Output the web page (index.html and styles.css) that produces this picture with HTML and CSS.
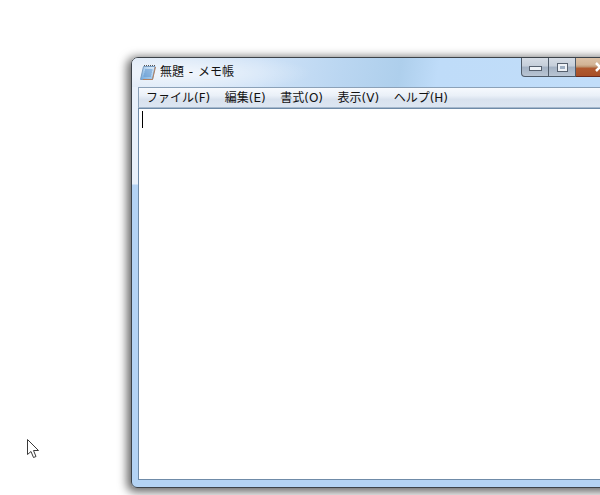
FILE: index.html
```html
<!DOCTYPE html>
<html lang="ja">
<head>
<meta charset="utf-8">
<title>無題 - メモ帳</title>
<link rel="stylesheet" href="styles.css">
</head>
<body>
<div class="desktop">
  <div class="window">
    <div class="titlebar">
      <svg class="app-icon" width="16" height="17" viewBox="0 0 16 17">
        <defs>
          <linearGradient id="page" x1="0" y1="1" x2="1" y2="0">
            <stop offset="0" stop-color="#6fa8dd"/>
            <stop offset="0.5" stop-color="#a9cdee"/>
            <stop offset="1" stop-color="#e4f0fb"/>
          </linearGradient>
        </defs>
        <path d="M3.500 2.500H15L12.500 15.500H0.500Z" fill="url(#page)" stroke="#7a9cc0"/>
        <path d="M5 6h7.500M4.500 8h7.500M4 10h7.500M3.500 12h7.500" stroke="#5f93cb" fill="none"/>
        <path d="M3 15.500H12.500L15.500 3" stroke="#b3805f" fill="none"/>
        <path d="M4 1.500h1M6 1.500h1M8 1.500h1M10 1.500h1M12 1.500h1M14 1.500h1" stroke="#555"/>
      </svg>
      <span class="title-text">無題 - メモ帳</span>
      <div class="caption-buttons">
        <div class="cap cap-min"><span class="glyph-min"></span></div>
        <div class="cap cap-max"><span class="glyph-max"></span></div>
        <div class="cap cap-close">
          <svg class="glyph-close" width="10" height="10" viewBox="0 0 10 10">
            <path d="M1 1L9 9M9 1L1 9" stroke="#fff" stroke-width="2.500" fill="none"/>
          </svg>
        </div>
      </div>
    </div>
    <div class="client">
      <div class="menubar">
        <span class="menu-item">ファイル(F)</span>
        <span class="menu-item">編集(E)</span>
        <span class="menu-item">書式(O)</span>
        <span class="menu-item">表示(V)</span>
        <span class="menu-item">ヘルプ(H)</span>
      </div>
      <div class="editor"><span class="caret"></span></div>
    </div>
  </div>
  <svg class="cursor" width="13" height="20" viewBox="0 0 13 20">
    <path d="M0.500 0.500V15.500L4 12.500 6.500 18.500 9 17.500 6.500 11.500H11.500Z" fill="#fff" stroke="#3a3a3a"/>
  </svg>
</div>
</body>
</html>
```
FILE: styles.css
```css
html, body {
  margin: 0;
  padding: 0;
  background: #fff;
}
.desktop {
  position: relative;
  width: 600px;
  height: 495px;
  overflow: hidden;
  background: #fff;
  font-family: "DejaVu Sans", "Noto Sans CJK JP", sans-serif;
  font-size: 12px;
  color: #111;
}
.window {
  position: absolute;
  left: 131px;
  top: 57px;
  width: 640px;
  height: 431px;
  box-sizing: border-box;
  border: 1px solid #3c4248;
  border-radius: 7px 7px 0 6px;
  box-shadow: -2px 2px 10px 2px rgba(0, 0, 0, .6);
  display: flex;
  flex-direction: column;
  padding: 0 0 7px 6px;
  background:
    linear-gradient(180deg, #e9f1fb 0, #e9f1fb 126px, #b4d3f4 127px, #b4d3f4 100%);
}
.titlebar {
  height: 29px;
  flex: none;
  margin-left: -6px;
  padding-left: 8px;
  display: flex;
  align-items: center;
  position: relative;
  border-radius: 6px 6px 0 0;
  background:
    radial-gradient(ellipse 130px 20px at 50px 15px, rgba(255,255,255,.65), rgba(255,255,255,0) 100%),
    linear-gradient(100deg, #dfeaf7 0, #cfe2f7 20%, #bad6f1 33%, #aecfec 42%, #bfdcf9 48%, #c3def9 100%);
}
.app-icon {
  flex: none;
  margin-right: 4px;
}
.title-text {
  line-height: 17px;
  font-size: 12px;
  white-space: nowrap;
  word-spacing: 1px;
}
.caption-buttons {
  position: absolute;
  left: 389px;
  top: 0;
  height: 19px;
  display: flex;
}
.cap {
  height: 19px;
  box-sizing: border-box;
  border: 1px solid #4e5a68;
  border-top: none;
  border-left-width: 0;
  display: flex;
  align-items: center;
  justify-content: center;
  background: linear-gradient(180deg, #d5dce5 0, #c5ced9 45%, #a3b1c3 50%, #b9c5d3 100%);
}
.cap-min {
  width: 28px;
  border-left-width: 1px;
  border-radius: 0 0 0 4px;
}
.cap-max {
  width: 27px;
}
.cap-close {
  width: 48px;
  border-color: #6b2a1c;
  background: linear-gradient(180deg, #dcc2a8 0, #d2b496 38%, #bd9370 50%, #b05a30 56%, #a85028 100%);
  justify-content: flex-start;
  padding-left: 19px;
}
.glyph-min {
  display: block;
  width: 11px;
  height: 3px;
  margin-top: 3px;
  background: #eef2f7;
  border: 1px solid #56606e;
}
.glyph-max {
  display: block;
  width: 5px;
  height: 3px;
  border: 2px solid #eef2f7;
  outline: 1px solid #56606e;
  background: #9fb0c4;
}
.glyph-close {
  display: block;
  flex: none;
}
.client {
  flex: 1;
  min-height: 0;
  display: flex;
  flex-direction: column;
}
.menubar {
  height: 21px;
  flex: none;
  box-sizing: border-box;
  display: flex;
  align-items: center;
  gap: 14.5px;
  padding-left: 7px;
  padding-top: 1px;
  border-top: 1px solid #8ba1b8;
  border-left: 1px solid #8ba1b8;
  background: linear-gradient(180deg, #f6f9fd 0, #eaf0f8 40%, #d9e2ee 60%, #dce6f2 100%);
  border-bottom: 1px solid #a6b8cc;
}
.menu-item {
  line-height: 17px;
  white-space: nowrap;
}
.editor {
  flex: 1;
  min-height: 0;
  box-sizing: border-box;
  background: #fff;
  border: 1px solid #6f8ba8;
  border-right: none;
  padding: 2px 0 0 3px;
}
.caret {
  display: block;
  width: 1px;
  height: 17px;
  background: #000;
}
.cursor {
  position: absolute;
  left: 27px;
  top: 439px;
}
```
